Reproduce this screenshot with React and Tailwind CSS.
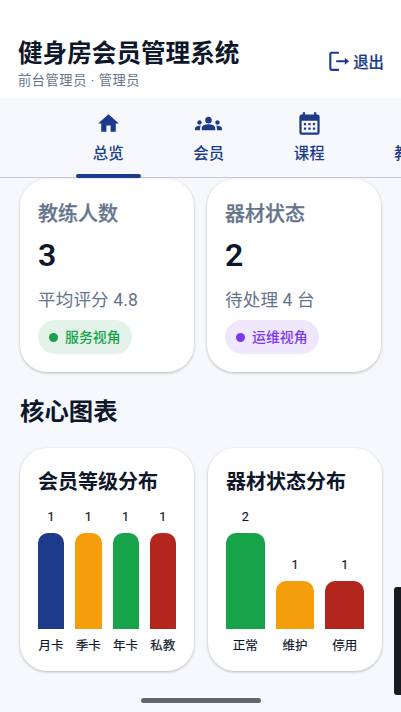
import { MdHome, MdGroups } from "react-icons/md";

const tabs = [
  { label: "总览", icon: MdHome, size: "size-[25px]", active: true },
  { label: "会员", icon: MdGroups, size: "size-[27px]" },
  { label: "课程", icon: CalendarIcon, size: "size-[27px]" },
  { label: "教练" },
];

const stats = [
  {
    title: "教练人数",
    value: "3",
    note: "平均评分 4.8",
    tag: "服务视角",
    tagClass: "bg-[#e3f3e9] text-[#16a34a]",
    dotClass: "bg-[#16a34a]",
  },
  {
    title: "器材状态",
    value: "2",
    note: "待处理 4 台",
    tag: "运维视角",
    tagClass: "bg-[#efe7fd] text-[#7c3aed]",
    dotClass: "bg-[#7c3aed]",
  },
];

const charts = [
  {
    title: "会员等级分布",
    bars: [
      { label: "月卡", value: 1, color: "bg-[#1e3a8a]" },
      { label: "季卡", value: 1, color: "bg-[#f59e0b]" },
      { label: "年卡", value: 1, color: "bg-[#16a34a]" },
      { label: "私教", value: 1, color: "bg-[#b3261e]" },
    ],
  },
  {
    title: "器材状态分布",
    bars: [
      { label: "正常", value: 2, color: "bg-[#16a34a]" },
      { label: "维护", value: 1, color: "bg-[#f59e0b]" },
      { label: "停用", value: 1, color: "bg-[#b3261e]" },
    ],
  },
];

const BAR_HEIGHT = 96.5;

function CalendarIcon({ className }) {
  return (
    <svg viewBox="0 -1 24 24" className={className} fill="currentColor">
      <path
        fillRule="evenodd"
        d="M19 3a2 2 0 0 1 2 2v14a2 2 0 0 1-2 2H5a2 2 0 0 1-2-2V5a2 2 0 0 1 2-2h1V1h2v2h8V1h2v2zM5 8.5V19h14V8.5z"
      />
      <path d="M7 10.5h2v2H7zM11 10.5h2v2h-2zM15 10.5h2v2h-2zM7 14.5h2v2H7zM11 14.5h2v2h-2zM15 14.5h2v2h-2z" />
    </svg>
  );
}

function LogoutIcon() {
  return (
    <svg
      viewBox="0 0 22 22"
      className="size-[22px]"
      fill="none"
      stroke="currentColor"
      strokeWidth="2.1"
      strokeLinecap="round"
    >
      <path d="M9.2 1.8H2.7Q1.3 1.8 1.3 3.2V17.5Q1.3 18.9 2.7 18.9H9.2" />
      <path d="M8 10.3H17" />
      <path d="M15.8 6.8L20.2 10.3L15.8 13.8Z" fill="currentColor" stroke="none" />
    </svg>
  );
}

function StatCard({ title, value, note, tag, tagClass, dotClass }) {
  return (
    <div className="h-[192.5px] flex-1 rounded-[27px] bg-white px-[18px] pt-[20px] shadow-[0_1px_3px_rgba(0,0,0,0.26)]">
      <div className="text-[20px] leading-[30px] font-medium text-[#64748b] [-webkit-text-stroke:0.25px]">{title}</div>
      <div className="mt-[6px] text-[32px] leading-10 font-semibold text-[#0f172a]">{value}</div>
      <div className="mt-[12px] text-[17.6px] leading-[26px] tracking-[0.1px] text-[#64748b]">{note}</div>
      <div
        className={`mt-[7px] flex h-[34px] w-[94px] items-center rounded-full pl-[11px] text-[13.9px] font-medium ${tagClass}`}
      >
        <span className={`mr-[7px] size-[9px] shrink-0 rounded-full ${dotClass}`} />
        <span className="whitespace-nowrap">{tag}</span>
      </div>
    </div>
  );
}

function ChartCard({ title, bars }) {
  const max = Math.max(...bars.map((b) => b.value));

  return (
    <div className="flex h-[223px] flex-1 flex-col rounded-[27px] bg-white px-[18px] pt-[19px] shadow-[0_1px_3px_rgba(0,0,0,0.26)]">
      <div className="text-[20px] leading-[30px] font-bold whitespace-nowrap text-[#0f172a]">{title}</div>
      <div className="mt-[12px] flex h-[146px] items-end gap-[11px] text-[12.5px] text-[#0f172a] [-webkit-text-stroke:0.2px]">
        {bars.map((bar) => (
          <div key={bar.label} className="flex min-w-0 flex-1 flex-col items-center">
            <span className="leading-[18px]">{bar.value}</span>
            <div
              className={`mt-[7px] w-full rounded-t-[10px] ${bar.color}`}
              style={{ height: (bar.value / max) * BAR_HEIGHT }}
            />
            <span className="mt-[8px] leading-[18px] whitespace-nowrap">{bar.label}</span>
          </div>
        ))}
      </div>
    </div>
  );
}

export default function App() {
  return (
    <div className="relative flex h-[712px] w-[401px] flex-col overflow-hidden bg-[#f6f8fc] font-[Roboto,'Noto_Sans_CJK_SC',sans-serif]">
      <header className="flex h-[98px] shrink-0 justify-between bg-white pr-[17px] pl-[18px]">
        <div className="pt-[37px]">
          <h1 className="text-[24.6px] leading-[34px] font-bold text-[#0f172a]">健身房会员管理系统</h1>
          <p className="mt-[1px] text-[13.2px] leading-[18px] tracking-[0.6px] text-[#64748b]">前台管理员 · 管理员</p>
        </div>
        <button className="mt-[51px] flex h-[22px] items-center gap-[2px] text-[15.4px] font-medium text-[#1e3a8a]">
          <LogoutIcon />
          <span className="pt-[3px] [-webkit-text-stroke:0.2px]">退出</span>
        </button>
      </header>

      <nav className="flex h-[80px] shrink-0 border-b border-[#c9c8d4] pl-[58px]">
        {tabs.map(({ label, icon: Icon, size, active }) => (
          <div key={label} className="flex w-[100.5px] shrink-0 flex-col items-center text-[#1e3a8a]">
            <div className="mt-[12px] flex h-[27px] shrink-0 items-center">{Icon && <Icon className={size} />}</div>
            <span className="mt-[6px] shrink-0 text-[15.4px] leading-[22px] font-medium">{label}</span>
            {active && <span className="mt-[9px] h-[4px] w-[65px] shrink-0 rounded-[2px] bg-[#1e3a8a]" />}
          </div>
        ))}
      </nav>

      <main className="px-[20px] pt-[1px]">
        <div className="flex gap-[13px]">
          {stats.map((stat) => (
            <StatCard key={stat.title} {...stat} />
          ))}
        </div>
        <h2 className="mt-[22px] text-[24.4px] leading-9 font-bold text-[#0f172a]">核心图表</h2>
        <div className="mt-[18.5px] -mr-px flex gap-[14px]">
          {charts.map((chart) => (
            <ChartCard key={chart.title} {...chart} />
          ))}
        </div>
      </main>

      {/* side panel handle and system gesture bar */}
      <div className="absolute top-[587px] right-0 h-[108px] w-[7px] rounded-l-[3px] bg-[#191c1e]" />
      <div className="absolute bottom-[9px] left-[141px] h-[5px] w-[120px] rounded-full bg-[#646569]" />
    </div>
  );
}
